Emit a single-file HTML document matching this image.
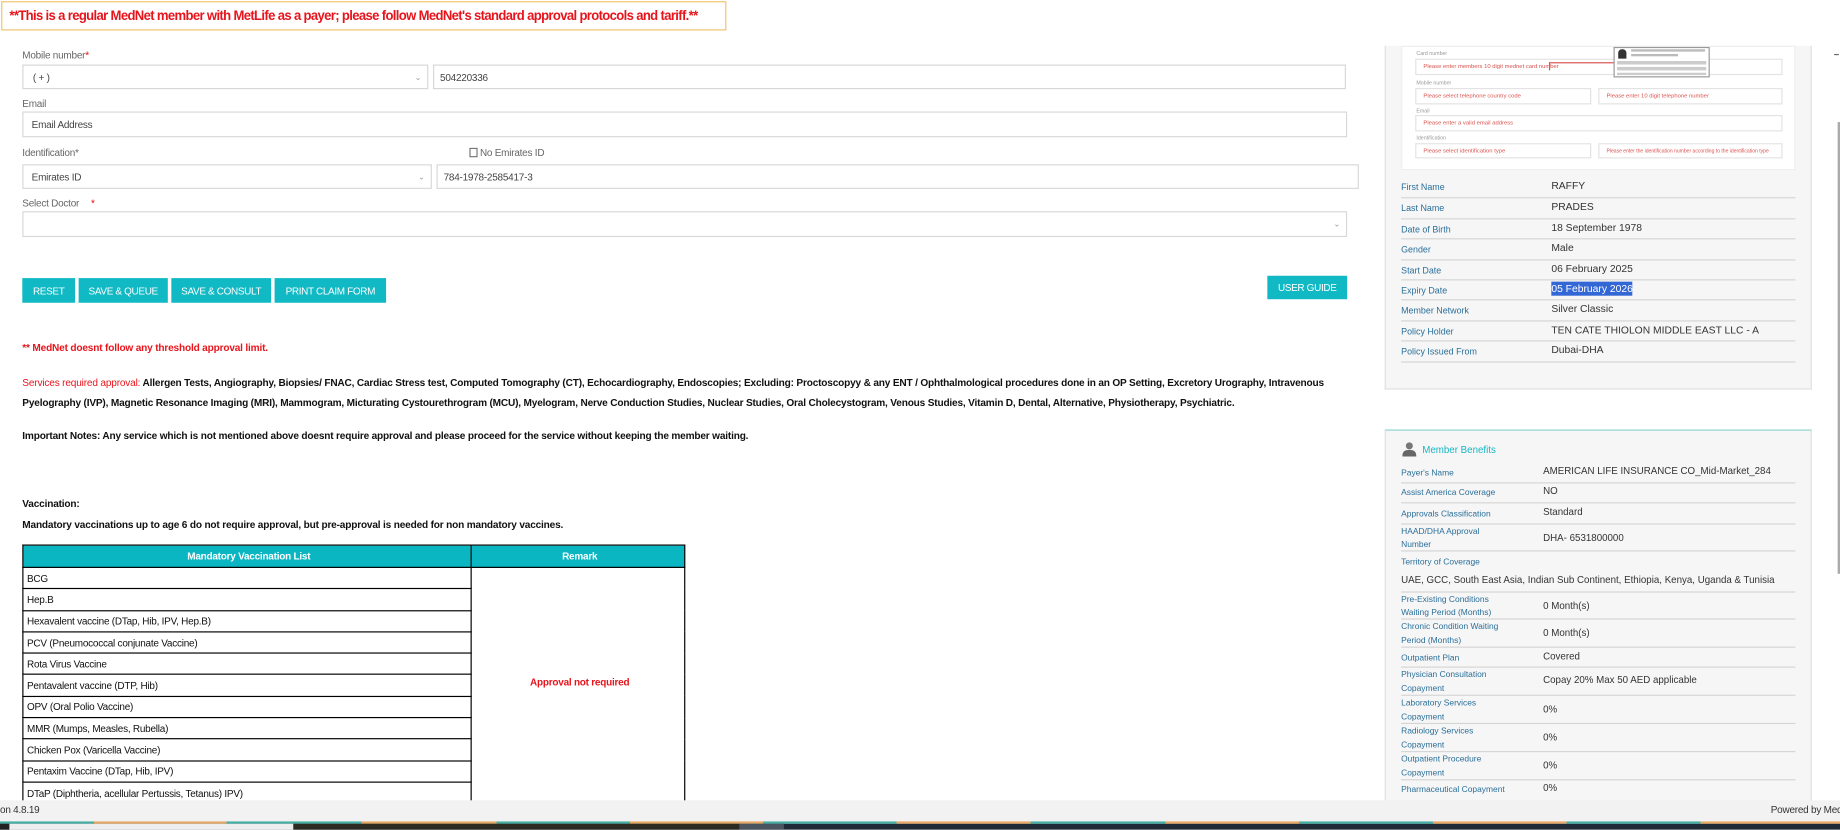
<!DOCTYPE html>
<html><head><meta charset="utf-8">
<style>
*{box-sizing:border-box;margin:0;padding:0}
html,body{width:1840px;height:830px;overflow:hidden;background:#fff}
#w{position:absolute;left:0;top:0;width:1568px;height:707px;transform:scale(1.17347);transform-origin:0 0;font-family:"Liberation Sans",Arial,sans-serif;color:#333}
.a{position:absolute}
.lbl{font-size:8.5px;color:#666;letter-spacing:-0.2px}
.inp{position:absolute;border:1px solid #d8d8d8;background:#fff;font-size:8.5px;color:#444;padding-left:9px;display:flex;align-items:center;letter-spacing:-0.2px}
.car{position:absolute;right:5px;top:50%;transform:translateY(-50%);font-size:7px;color:#999}
.btn{position:absolute;background:#10b9c3;color:#fff;font-size:8.5px;display:flex;align-items:center;justify-content:center;letter-spacing:-0.3px}
.b{font-weight:bold;color:#111;font-size:8.6px;letter-spacing:-0.15px}
table.v{position:absolute;left:19px;top:464px;width:565px;border-collapse:collapse;font-size:8.5px}
table.v td,table.v th{border:1px solid #000;height:18.3px;padding-left:3px;text-align:left;font-weight:normal;color:#111;letter-spacing:-0.2px}
table.v th{background:#0ab6c2;color:#fff;font-weight:bold;text-align:center;height:19px}
.panel{position:absolute;background:#f6f6f6;border:1px solid #e0e0e0}
.row{position:absolute;left:13px;right:13px;border-bottom:1px solid #d5d5d5}
.row .k{position:absolute;left:0;font-size:7.6px;color:#2a6f9a;line-height:12.5px}
.row .val{position:absolute;font-size:8.8px;color:#333;white-space:nowrap}
.bn .k{font-size:7.2px;line-height:11.5px}
.bn .val{font-size:8.3px}
.ph{color:#d9534f;font-size:5px}
.pb{position:absolute;border:1px solid #e3e3e3;background:#fff;padding-left:6px;display:flex;align-items:center}
.pl{position:absolute;font-size:4.5px;color:#999}
.ft{z-index:10}
</style></head><body><div id="w">

<div class="a" style="left:1px;top:1px;width:618px;height:25px;border:1px solid #f0c36d;"></div>
<div class="a" style="left:8px;top:6px;font-size:12px;font-weight:bold;color:#e8141c;letter-spacing:-0.6px;white-space:nowrap;transform:scaleX(0.93);transform-origin:0 0">**This is a regular MedNet member with MetLife as a payer; please follow MedNet's standard approval protocols and tariff.**</div>

<div class="a lbl" style="left:19px;top:42px">Mobile number<span style="color:#e00">*</span></div>
<div class="inp" style="left:19px;top:55px;width:346px;height:21px;padding-left:8px">( + )<span class="car">&#8964;</span></div>
<div class="inp" style="left:369px;top:55px;width:778px;height:21px;padding-left:5px">504220336</div>

<div class="a lbl" style="left:19px;top:83px">Email</div>
<div class="inp" style="left:19px;top:95px;width:1129px;height:22px;padding-left:7px">Email Address</div>

<div class="a lbl" style="left:19px;top:125px">Identification*</div>
<div class="a lbl" style="left:400px;top:125px;display:flex;align-items:center"><span style="display:inline-block;width:7px;height:8px;border:1px solid #777;margin-right:2px;background:#fff"></span>No Emirates ID</div>
<div class="inp" style="left:19px;top:140px;width:349px;height:21px;padding-left:7px">Emirates ID<span class="car">&#8964;</span></div>
<div class="inp" style="left:372px;top:140px;width:786px;height:21px;padding-left:5px">784-1978-2585417-3</div>

<div class="a lbl" style="left:19px;top:168px">Select Doctor <span style="color:#e00;margin-left:8px">*</span></div>
<div class="inp" style="left:19px;top:180px;width:1129px;height:22px"><span class="car">&#8964;</span></div>

<div class="btn" style="left:19px;top:237px;width:45px;height:21px">RESET</div>
<div class="btn" style="left:67px;top:237px;width:76px;height:21px">SAVE &amp; QUEUE</div>
<div class="btn" style="left:146px;top:237px;width:85px;height:21px">SAVE &amp; CONSULT</div>
<div class="btn" style="left:234px;top:237px;width:95px;height:21px">PRINT CLAIM FORM</div>
<div class="btn" style="left:1080px;top:235px;width:68px;height:20px">USER GUIDE</div>

<div class="a b" style="left:19px;top:291px;color:#e8141c">** MedNet doesnt follow any threshold approval limit.</div>
<div class="a b" style="left:19px;top:318px;width:1140px;line-height:17px"><span style="color:#e8141c;font-weight:normal">Services required approval:</span> Allergen Tests, Angiography, Biopsies/ FNAC, Cardiac Stress test, Computed Tomography (CT), Echocardiography, Endoscopies; Excluding: Proctoscopyy &amp; any ENT / Ophthalmological procedures done in an OP Setting, Excretory Urography, Intravenous Pyelography (IVP), Magnetic Resonance Imaging (MRI), Mammogram, Micturating Cystourethrogram (MCU), Myelogram, Nerve Conduction Studies, Nuclear Studies, Oral Cholecystogram, Venous Studies, Vitamin D, Dental, Alternative, Physiotherapy, Psychiatric.</div>
<div class="a b" style="left:19px;top:366px">Important Notes: Any service which is not mentioned above doesnt require approval and please proceed for the service without keeping the member waiting.</div>
<div class="a b" style="left:19px;top:424px">Vaccination:</div>
<div class="a b" style="left:19px;top:442px">Mandatory vaccinations up to age 6 do not require approval, but pre-approval is needed for non mandatory vaccines.</div>

<table class="v">
<tr><th style="width:382px">Mandatory Vaccination List</th><th>Remark</th></tr>
<tr><td>BCG</td><td rowspan="11" style="text-align:center;color:#e8141c;font-weight:bold;border-bottom:none;vertical-align:top;padding-top:92px">Approval not required</td></tr>
<tr><td>Hep.B</td></tr>
<tr><td>Hexavalent vaccine (DTap, Hib, IPV, Hep.B)</td></tr>
<tr><td>PCV (Pneumococcal conjunate Vaccine)</td></tr>
<tr><td>Rota Virus Vaccine</td></tr>
<tr><td>Pentavalent vaccine (DTP, Hib)</td></tr>
<tr><td>OPV (Oral Polio Vaccine)</td></tr>
<tr><td>MMR (Mumps, Measles, Rubella)</td></tr>
<tr><td>Chicken Pox (Varicella Vaccine)</td></tr>
<tr><td>Pentaxim Vaccine (DTap, Hib, IPV)</td></tr>
<tr><td>DTaP (Diphtheria, acellular Pertussis, Tetanus) IPV)</td></tr>
</table>

<!-- right panel 1 -->
<div class="panel" style="left:1180px;top:39px;width:364px;height:293px;border-top:none"></div>
<div class="a" style="left:1194px;top:39px;width:336px;height:106px;background:#fff;border:1px solid #eee"></div>
<div class="pl" style="left:1207px;top:43px">Card number</div>
<div class="pb" style="left:1206px;top:50px;width:313px;height:14px"><span class="ph">Please enter members 10 digit mednet card number</span></div>
<div class="a" style="left:1320px;top:53px;width:1px;height:7px;background:#d9534f"></div>
<div class="a" style="left:1320px;top:53px;width:56px;height:1px;background:#d9534f"></div>
<div class="a" style="left:1375px;top:40px;width:82px;height:26px;background:#fff;border:1px solid #999"></div>
<div class="a" style="left:1379px;top:42px;width:7px;height:8px;background:#333;border-radius:3px 3px 0 0"></div>
<div class="a" style="left:1390px;top:42px;width:63px;height:2px;background:#bbb"></div>
<div class="a" style="left:1390px;top:46px;width:40px;height:2px;background:#bbb"></div>
<div class="a" style="left:1378px;top:52px;width:76px;height:3px;background:#ccc"></div>
<div class="a" style="left:1378px;top:57px;width:76px;height:3px;background:#ccc"></div>
<div class="a" style="left:1378px;top:62px;width:76px;height:2px;background:#ccc"></div>
<div class="pl" style="left:1207px;top:68px">Mobile number</div>
<div class="pb" style="left:1206px;top:75px;width:150px;height:14px"><span class="ph">Please select telephone country code</span></div>
<div class="pb" style="left:1362px;top:75px;width:157px;height:14px"><span class="ph">Please enter 10 digit telephone number</span></div>
<div class="pl" style="left:1207px;top:92px">Email</div>
<div class="pb" style="left:1206px;top:98px;width:313px;height:14px"><span class="ph">Please enter a valid email address</span></div>
<div class="pl" style="left:1207px;top:115px">Identification</div>
<div class="pb" style="left:1206px;top:122px;width:150px;height:13px"><span class="ph">Please select identification type</span></div>
<div class="pb" style="left:1362px;top:122px;width:157px;height:13px"><span class="ph" style="white-space:nowrap;font-size:4.3px">Please enter the identification number according to the identification type</span></div>

<div style="position:absolute;left:1181px;top:152px;width:362px">
<div class="row" style="top:0;height:17px"><span class="k" style="top:2px">First Name</span><span class="val" style="left:128px;top:1px">RAFFY</span></div>
<div class="row" style="top:17px;height:18px"><span class="k" style="top:3px">Last Name</span><span class="val" style="left:128px;top:2px">PRADES</span></div>
<div class="row" style="top:35px;height:17px"><span class="k" style="top:3px">Date of Birth</span><span class="val" style="left:128px;top:2px">18 September 1978</span></div>
<div class="row" style="top:52px;height:18px"><span class="k" style="top:3px">Gender</span><span class="val" style="left:128px;top:2px">Male</span></div>
<div class="row" style="top:70px;height:17px"><span class="k" style="top:3px">Start Date</span><span class="val" style="left:128px;top:2px">06 February 2025</span></div>
<div class="row" style="top:87px;height:17px"><span class="k" style="top:3px">Expiry Date</span><span class="val" style="left:128px;top:1px;background:#3367d6;color:#fff;padding:1px 0">05 February 2026</span></div>
<div class="row" style="top:104px;height:18px"><span class="k" style="top:3px">Member Network</span><span class="val" style="left:128px;top:2px">Silver Classic</span></div>
<div class="row" style="top:122px;height:17px"><span class="k" style="top:3px">Policy Holder</span><span class="val" style="left:128px;top:2px">TEN CATE THIOLON MIDDLE EAST LLC - A</span></div>
<div class="row" style="top:139px;height:18px"><span class="k" style="top:3px">Policy Issued From</span><span class="val" style="left:128px;top:2px">Dubai-DHA</span></div>
</div>

<!-- benefits panel -->
<div class="panel" style="left:1180px;top:366px;width:364px;height:330px;border-top:1px solid #8fd3cc"></div>
<svg class="a" style="left:1195px;top:376px" width="12" height="13" viewBox="0 0 12 13"><circle cx="6" cy="4" r="3" fill="#777"/><path d="M0 13 Q0 7 6 7.5 Q12 7 12 13Z" fill="#666"/></svg>
<div class="a" style="left:1212px;top:378px;font-size:8.3px;color:#18b5c2">Member Benefits</div>
<div class="bn" style="position:absolute;left:1181px;top:395px;width:362px">
<div class="row" style="top:0;height:17px"><span class="k" style="top:2px">Payer's Name</span><span class="val" style="left:121px;top:1px">AMERICAN LIFE INSURANCE CO_Mid-Market_284</span></div>
<div class="row" style="top:17px;height:16.6px"><span class="k" style="top:2px">Assist America Coverage</span><span class="val" style="left:121px;top:1px">NO</span></div>
<div class="row" style="top:33.6px;height:18px"><span class="k" style="top:3px">Approvals Classification</span><span class="val" style="left:121px;top:2px">Standard</span></div>
<div class="row" style="top:51.5px;height:23.5px"><span class="k" style="top:0">HAAD/DHA Approval<br>Number</span><span class="val" style="left:121px;top:6px">DHA- 6531800000</span></div>
<div class="row" style="top:75px;height:34.5px"><span class="k" style="top:3px">Territory of Coverage</span><span class="val" style="left:0;top:19px">UAE, GCC, South East Asia, Indian Sub Continent, Ethiopia, Kenya, Uganda &amp; Tunisia</span></div>
<div class="row" style="top:109.5px;height:23.5px"><span class="k" style="top:0">Pre-Existing Conditions<br>Waiting Period (Months)</span><span class="val" style="left:121px;top:6px">0 Month(s)</span></div>
<div class="row" style="top:133px;height:24px"><span class="k" style="top:0">Chronic Condition Waiting<br>Period (Months)</span><span class="val" style="left:121px;top:6px">0 Month(s)</span></div>
<div class="row" style="top:157px;height:17px"><span class="k" style="top:3px">Outpatient Plan</span><span class="val" style="left:121px;top:2px">Covered</span></div>
<div class="row" style="top:174px;height:24px"><span class="k" style="top:0">Physician Consultation<br>Copayment</span><span class="val" style="left:121px;top:5px">Copay 20% Max 50 AED applicable</span></div>
<div class="row" style="top:198px;height:24px"><span class="k" style="top:0">Laboratory Services<br>Copayment</span><span class="val" style="left:121px;top:6px">0%</span></div>
<div class="row" style="top:222px;height:24px"><span class="k" style="top:0">Radiology Services<br>Copayment</span><span class="val" style="left:121px;top:6px">0%</span></div>
<div class="row" style="top:246px;height:24px"><span class="k" style="top:0">Outpatient Procedure<br>Copayment</span><span class="val" style="left:121px;top:6px">0%</span></div>
<div class="row" style="top:270px;height:18px;border:none"><span class="k" style="top:2px">Pharmaceutical Copayment</span><span class="val" style="left:121px;top:1px">0%</span></div>
</div>

<div class="a" style="left:1566px;top:104px;width:2px;height:385px;background:#aaa"></div>
<div class="a" style="left:1563px;top:46px;width:4px;height:1px;background:#666"></div>

<!-- footer -->
<div class="a ft" style="left:0;top:682px;width:1568px;height:18px;background:#f2f2f2"></div>
<div class="a ft" style="left:0;top:685px;font-size:8.5px;color:#333;letter-spacing:-0.2px">on 4.8.19</div>
<div class="a ft" style="left:1509px;top:685px;font-size:8.5px;color:#333;white-space:nowrap;letter-spacing:-0.2px">Powered by MedNet</div>
<div class="a ft" style="left:0;top:700px;width:1568px;height:2px;background:repeating-linear-gradient(90deg,#43b0a3 0 80px,#e8a862 80px 193px,#43b0a3 193px 308px,#e8a862 308px 423px,#43b0a3 423px 537px,#e8a862 537px 650px,#43b0a3 650px 764px,#e8a862 764px 878px,#43b0a3 878px 993px,#e8a862 993px 1107px,#43b0a3 1107px 1221px,#e8a862 1221px 1335px,#43b0a3 1335px 1449px,#e8a862 1449px 1568px)"></div>
<div class="a ft" style="left:0;top:702px;width:1568px;height:5px;background:#1e2a35"></div>
<div class="a ft" style="left:0;top:702px;width:8px;height:5px;background:#222"></div>
<div class="a ft" style="left:8px;top:702px;width:242px;height:5px;background:#eee"></div>
<div class="a ft" style="left:250px;top:702px;width:380px;height:5px;background:#2b2b22"></div>
<div class="a ft" style="left:630px;top:702px;width:38px;height:5px;background:#4a5560"></div>
</div></body></html>
